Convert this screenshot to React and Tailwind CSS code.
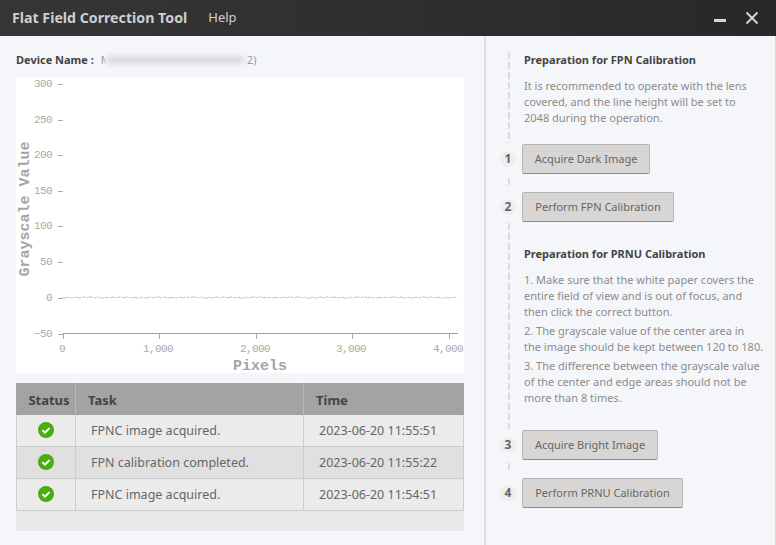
const logs = [
  { task: 'FPNC image acquired.', time: '2023-06-20 11:55:51', bg: 'bg-[#ebebeb]' },
  { task: 'FPN calibration completed.', time: '2023-06-20 11:55:22', bg: 'bg-[#e0e0e0]' },
  { task: 'FPNC image acquired.', time: '2023-06-20 11:54:51', bg: 'bg-[#ebebeb]' },
]

const yTicks = [
  { label: '300', y: 6 },
  { label: '250', y: 41.6 },
  { label: '200', y: 77.2 },
  { label: '150', y: 112.8 },
  { label: '100', y: 148.4 },
  { label: '50', y: 184 },
  { label: '0', y: 219.6 },
  { label: '\u221250', y: 255.5 },
]

const xTicks = [
  { label: '0', x: 47 },
  { label: '1,000', x: 143 },
  { label: '2,000', x: 240 },
  { label: '3,000', x: 336 },
  { label: '4,000', x: 433 },
]

// noise trace hugging the zero line
const noise = Array.from({ length: 198 }, (_, i) => {
  const x = 47 + i * 2
  const y = 219.5 + Math.sin(i * 1.7) * 0.5 + Math.sin(i * 0.37) * 0.3
  return `${x},${y.toFixed(1)}`
}).join(' ')

const dashes = [
  { top: 16, height: 91 },
  { top: 142, height: 8 },
  { top: 187, height: 206 },
  { top: 427, height: 8 },
]

function Chart() {
  return (
    <svg width="448" height="295" viewBox="0 0 448 295" className="block bg-white">
      <g fill="#aaaaaa" fontFamily="'Liberation Mono', monospace" fontSize="11" letterSpacing="-0.6">
        {yTicks.map(t => (
          <text key={t.label} x="36" y={t.y + 3} textAnchor="end">{t.label}</text>
        ))}
        {xTicks.map(t => (
          <text key={t.label} x={t.x - 1} y="274" textAnchor="middle">{t.label}</text>
        ))}
      </g>
      <g stroke="#aaaaaa" strokeWidth="1">
        {yTicks.map(t => (
          <line key={t.label} x1="42" x2="47" y1={Math.round(t.y) + 0.5} y2={Math.round(t.y) + 0.5} />
        ))}
        {xTicks.map(t => (
          <line key={t.label} x1={t.x + 0.5} x2={t.x + 0.5} y1="256" y2="261" />
        ))}
      </g>
      <line x1="47" x2="442" y1="255.5" y2="255.5" stroke="#a0a0a0" />
      <polyline points={noise} fill="none" stroke="#c4c4c4" strokeWidth="1" strokeDasharray="7 1 3 1" />
      <g fill="#a4a4a4" fontFamily="'Liberation Mono', monospace" fontSize="15" fontWeight="700">
        <text x="244" y="291.5" textAnchor="middle">Pixels</text>
        <text transform="translate(13 131) rotate(-90)" textAnchor="middle">Grayscale Value</text>
      </g>
    </svg>
  )
}

function StatusIcon() {
  return (
    <svg width="16" height="16" viewBox="0 0 16 16">
      <circle cx="8" cy="8" r="8" fill="#4bab12" />
      <path d="M4.4 8.2 L7 10.7 L11.6 6" fill="none" stroke="#ffffff" strokeWidth="2" />
    </svg>
  )
}

function LogTable() {
  return (
    <div className="mt-[10px] w-[448px] text-[12.5px]">
      <div className="grid grid-cols-[60px_228px_160px] h-8 bg-[#a3a3a3] text-[13px] font-bold text-[#444444]">
        <div className="flex items-center justify-center pl-[7px] pt-[3px] border-r border-[#b9b9b9]">Status</div>
        <div className="flex items-center pl-3 pt-[3px] border-r border-[#b9b9b9]">Task</div>
        <div className="flex items-center pl-3 pt-[3px]">Time</div>
      </div>
      {logs.map((row, i) => (
        <div key={i} className={`grid grid-cols-[59px_228px_1fr] h-8 border-b border-x border-[#cccccc] text-[#666666] ${row.bg}`}>
          <div className="flex items-center justify-center pb-[1px] border-r border-[#cccccc]"><StatusIcon /></div>
          <div className="flex items-center pl-[15px] pt-[1px] border-r border-[#cccccc]">{row.task}</div>
          <div className="flex items-center pl-[15px] pt-[1px]">{row.time}</div>
        </div>
      ))}
      <div className="h-5 bg-[#e8e8e8]" />
    </div>
  )
}

function Step({ n, label, width, className }) {
  return (
    <div className={`flex items-center gap-[6px] ${className}`}>
      <span className="flex items-center justify-center w-4 h-4 rounded-full bg-[#eeeeee] text-[12px] font-bold text-[#666666]">{n}</span>
      <button className={`h-[30px] rounded-[2px] border border-[#b4b4b4] border-b-[#e4732a] bg-[#d8d6d4] text-[11px] text-[#666666] ${width}`}>{label}</button>
    </div>
  )
}

export default function App() {
  return (
    <div className="w-[776px] h-[545px] flex flex-col overflow-hidden bg-[#f5f6fa] font-['Noto_Sans',sans-serif]">
      <header className="h-9 shrink-0 flex items-center bg-gradient-to-r from-[#363636] to-[#282828] text-[#cfcfcf]">
        <h1 className="ml-3 text-[14.2px] font-bold">Flat Field Correction Tool</h1>
        <span className="ml-[21px] text-[13px]">Help</span>
        <svg width="12" height="3" className="ml-auto mt-[5px]"><rect width="12" height="3" fill="#d4d4d4" /></svg>
        <svg width="14" height="14" viewBox="0 0 14 14" className="ml-[19px] mr-[17px]">
          <path d="M1.5 1.5 L12.5 12.5 M12.5 1.5 L1.5 12.5" stroke="#d4d4d4" strokeWidth="2" />
        </svg>
      </header>

      <main className="flex-1 flex border-r border-[#d8d8d8]">
        <section className="w-[484px] shrink-0 pl-4 pt-4">
          <div className="h-4 flex items-center text-[11px]">
            <span className="font-bold text-[#444444]">Device Name :</span>
            <span className="ml-[7px] w-1 text-[#999999]">M</span>
            <span className="w-[142px] h-[14px] flex items-center bg-[#f0f1f4] blur-[1px]">
              <span className="block mx-[3px] w-[134px] h-[6px] bg-[#d6d7da] blur-[2px]" />
            </span>
            <span className="text-[#999999]">2)</span>
          </div>
          <div className="mt-[10px]">
            <Chart />
          </div>
          <LogTable />
        </section>

        <section className="relative flex-1 border-l-2 border-[#e0e0e0] pl-[14px] pt-4">
          {dashes.map(d => (
            <div
              key={d.top}
              className="absolute left-[22px] w-[2px] bg-[repeating-linear-gradient(to_bottom,#dcdcdc_0,#dcdcdc_7px,transparent_7px,transparent_10px)]"
              style={{ top: d.top, height: d.height }}
            />
          ))}
          <div className="relative pl-6 text-[11px] leading-4 text-[#8c8c8c]">
            <h2 className="font-bold text-[#444444]">Preparation for FPN Calibration</h2>
            <p className="mt-[10px]">It is recommended to operate with the lens<br />covered, and the line height will be set to<br />2048 during the operation.</p>
          </div>
          <Step n="1" label="Acquire Dark Image" width="w-[128px]" className="relative mt-[18px]" />
          <Step n="2" label="Perform FPN Calibration" width="w-[152px]" className="relative mt-[18px]" />
          <div className="relative pl-6 mt-6 text-[11px] leading-4 text-[#8c8c8c]">
            <h2 className="font-bold text-[#444444]">Preparation for PRNU Calibration</h2>
            <p className="mt-[10px]">1. Make sure that the white paper covers the<br />entire field of view and is out of focus, and<br />then click the correct button.</p>
            <p className="mt-[3px]">2. The grayscale value of the center area in<br />the image should be kept between 120 to 180.</p>
            <p className="mt-[3px]">3. The difference between the grayscale value<br />of the center and edge areas should not be<br />more than 8 times.</p>
          </div>
          <Step n="3" label="Acquire Bright Image" width="w-[136px]" className="relative mt-6" />
          <Step n="4" label="Perform PRNU Calibration" width="w-[161px]" className="relative mt-[18px]" />
        </section>
      </main>
    </div>
  )
}
